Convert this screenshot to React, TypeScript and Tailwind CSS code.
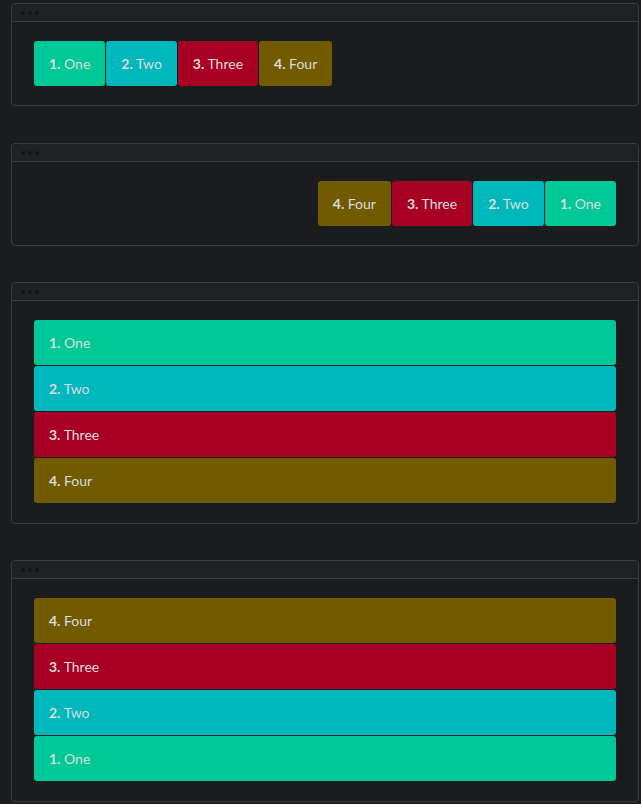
import React from "react";

const items = [
  { n: "1.", t: "One", c: "bg-[#00c896]" },
  { n: "2.", t: "Two", c: "bg-[#00b8bc]" },
  { n: "3.", t: "Three", c: "bg-[#a80024]" },
  { n: "4.", t: "Four", c: "bg-[#715a00]" },
];

function Win({ children, className, pb }: { children: React.ReactNode; className?: string; pb: string }) {
  return (
    <div className={"ml-[11px] mr-[2px] rounded-[4px] border border-[#3a3c3e] bg-[#1b1c1e] " + (className ?? "")}>
      <div className="flex h-[18px] items-center gap-[3px] rounded-t-[4px] border-b border-[#3a3c3e] bg-[#1f2223] pl-[9px]">
        <span className="h-[4px] w-[4px] rounded-full bg-[#141616]" />
        <span className="h-[4px] w-[4px] rounded-full bg-[#141616]" />
        <span className="h-[4px] w-[4px] rounded-full bg-[#141616]" />
      </div>
      <div className={"px-[22px] pt-[19px] " + pb}>{children}</div>
    </div>
  );
}

function Btn({ it }: { it: (typeof items)[number] }) {
  return (
    <div
      className={
        "flex h-[45px] items-center rounded-[3px] px-[15px] text-[14px] text-[#d8dcdc] " + it.c
      }
    >
      <span className="font-bold">{it.n}</span>
      <span>&nbsp;{it.t}</span>
    </div>
  );
}

export default function App() {
  return (
    <div
      className="min-h-[804px] w-[641px] bg-[#1b1c1e] pt-[3px]"
      style={{ fontFamily: 'Lato, "Open Sans", sans-serif' }}
    >
      <Win pb="pb-[19px]">
        <div className="flex gap-[1px]">
          {items.map((it) => (
            <Btn key={it.n} it={it} />
          ))}
        </div>
      </Win>
      <Win className="mt-[37px]" pb="pb-[19px]">
        <div className="flex flex-row-reverse justify-start gap-[1px]">
          {items.map((it) => (
            <Btn key={it.n} it={it} />
          ))}
        </div>
      </Win>
      <Win className="mt-[36px]" pb="pb-[20px]">
        <div className="flex flex-col gap-[1px]">
          {items.map((it) => (
            <Btn key={it.n} it={it} />
          ))}
        </div>
      </Win>
      <Win className="mt-[36px]" pb="pb-[20px]">
        <div className="flex flex-col-reverse gap-[1px]">
          {items.map((it) => (
            <Btn key={it.n} it={it} />
          ))}
        </div>
      </Win>
    </div>
  );
}
